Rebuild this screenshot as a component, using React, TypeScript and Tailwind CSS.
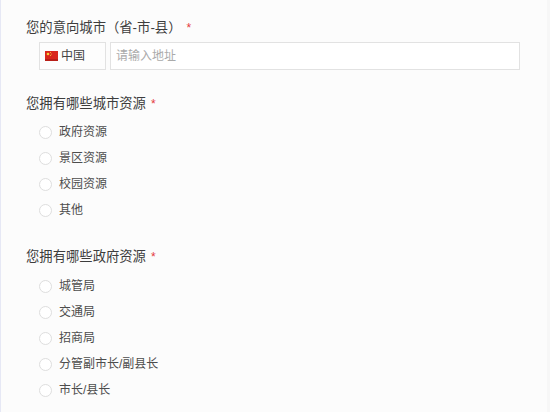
const font = "font-['Liberation_Sans','Noto_Sans_CJK_SC',sans-serif]";

function Flag() {
  return (
    <svg width="13" height="10" viewBox="0 0 13 10" className="shrink-0">
      <rect width="13" height="10" fill="#d9261c" />
      <rect y="8" width="13" height="2" fill="#b81f18" />
      <circle cx="3" cy="3" r="1.3" fill="#f5d33a" />
      <circle cx="5.5" cy="1.5" r="0.5" fill="#f5d33a" />
      <circle cx="6.3" cy="3" r="0.5" fill="#f5d33a" />
      <circle cx="5.5" cy="4.6" r="0.5" fill="#f5d33a" />
    </svg>
  );
}

function Options({ items }: { items: string[] }) {
  return (
    <div className="flex flex-col pl-[13px]">
      {items.map((item) => (
        <div key={item} className="flex h-[26px] items-center">
          <span className="h-[13px] w-[13px] rounded-full border border-[#dedede] bg-white" />
          <span className="ml-[7px] text-[12px] text-[#4d4d4d]">{item}</span>
        </div>
      ))}
    </div>
  );
}

function Title({ text, gap }: { text: string; gap: string }) {
  return (
    <div className="flex h-[20px] items-center text-[13.33px] text-[#3d3d3d]">
      <span>{text}</span>
      <span className={`${gap} text-[12px] text-[#e4393c]`}>*</span>
    </div>
  );
}

export default function App() {
  return (
    <div className={`${font} h-[412px] w-[550px] overflow-hidden border-l border-l-[#e6e8f5] border-r-[3px] border-r-[#f7f7f7] bg-[#fcfcfc] pl-[25px] pt-[18px]`}>
      <Title text="您的意向城市（省-市-县）" gap="ml-[5px]" />
      <div className="mt-[4px] flex pl-[13px]">
        <div className="flex h-[28px] w-[67px] items-center border border-[#e2e2e2] bg-[#fdfdfd] pl-[5px] text-[12px] text-[#444444]">
          <Flag />
          <span className="ml-[3px]">中国</span>
        </div>
        <input
          placeholder="请输入地址"
          readOnly
          className="ml-[4px] h-[28px] w-[410px] border border-[#e2e2e2] bg-white pl-[5px] text-[12px] outline-none placeholder:text-[#aaaaaa]"
        />
      </div>
      <div className="mt-[24px]">
        <Title text="您拥有哪些城市资源" gap="ml-[5px]" />
      </div>
      <div className="mt-[5px]">
        <Options items={["政府资源", "景区资源", "校园资源", "其他"]} />
      </div>
      <div className="mt-[24px]">
        <Title text="您拥有哪些政府资源" gap="ml-[5px]" />
      </div>
      <div className="mt-[6px]">
        <Options items={["城管局", "交通局", "招商局", "分管副市长/副县长", "市长/县长"]} />
      </div>
    </div>
  );
}
